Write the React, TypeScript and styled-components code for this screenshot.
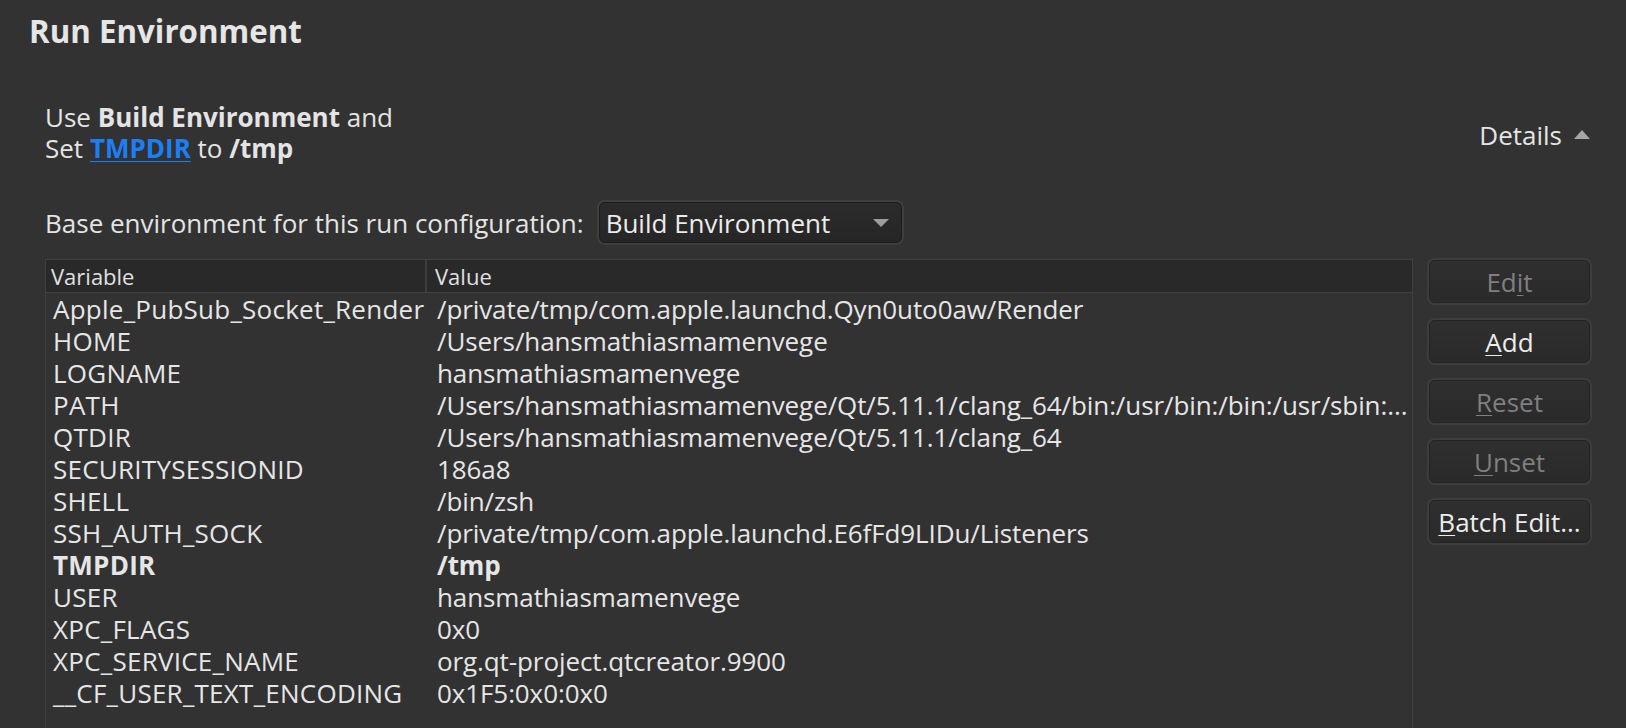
import React from "react";
import styled, { createGlobalStyle } from "styled-components";

const GlobalStyle = createGlobalStyle`
  html, body {
    margin: 0;
    padding: 0;
    background: #323232;
  }
  body {
    font-family: "Open Sans", "Liberation Sans", Arial, sans-serif;
    color: #e4e4e4;
  }
  * { box-sizing: border-box; }
`;

const Page = styled.div`
  height: 728px;
  overflow: hidden;
  display: flex;
  flex-direction: column;
  padding: 0 34px 0 29px;
`;

const Title = styled.h1`
  margin: 11px 0 0 0;
  font-size: 31.3px;
  line-height: 40px;
  font-weight: bold;
  color: #e6e6e6;
`;

const Section = styled.div`
  flex: 1;
  min-height: 0;
  display: flex;
  flex-direction: column;
  margin-left: 16px;
`;

const SummaryRow = styled.div`
  margin-top: 51px;
  display: flex;
  align-items: center;
  justify-content: space-between;
`;

const Summary = styled.div`
  font-size: 26px;
  line-height: 31px;
`;

const Strong = styled.b`
  font-weight: bold;
`;

const Link = styled.a`
  color: #1b80f7;
  font-weight: bold;
  text-decoration: underline;
  text-decoration-thickness: 1px;
  text-underline-offset: 3px;
`;

const DetailsToggle = styled.div`
  display: flex;
  align-items: center;
  gap: 12px;
  font-size: 26px;
  margin: 3px 2px 0 0;
`;

const UpTriangle = styled.span`
  width: 0;
  height: 0;
  border-left: 8px solid transparent;
  border-right: 8px solid transparent;
  border-bottom: 9px solid #a6a6a6;
`;

const BaseRow = styled.div`
  margin-top: 38px;
  display: flex;
  align-items: center;
  gap: 13px;
  font-size: 26px;
`;

const Combo = styled.div`
  width: 303px;
  height: 41px;
  margin-left: 2px;
  display: flex;
  align-items: center;
  justify-content: space-between;
  padding: 0 12px 0 6px;
  background: linear-gradient(#2b2b2b, #262626);
  border: 1px solid #1c1c1c;
  border-radius: 6px;
  box-shadow: 0 0 0 2px #3f3f3f;
  font-size: 26px;
  color: #ececec;
`;

const DownTriangle = styled.span`
  width: 0;
  height: 0;
  border-left: 8px solid transparent;
  border-right: 8px solid transparent;
  border-top: 8px solid #9c9c9c;
`;

const TableArea = styled.div`
  margin-top: 16px;
  flex: 1;
  min-height: 0;
  display: flex;
  gap: 14px;
`;

const Table = styled.div`
  flex: 1;
  min-width: 0;
  border: 1px solid #404040;
  border-bottom: none;
  display: flex;
  flex-direction: column;
`;

const HeaderRow = styled.div`
  display: grid;
  grid-template-columns: 381px 1fr;
  height: 33px;
  background: #292929;
  border-bottom: 1px solid #404040;
  font-size: 22px;
  color: #e0e0e0;
`;

const HeaderCell = styled.div<{ $divider?: boolean }>`
  display: flex;
  align-items: center;
  padding-left: ${(p) => (p.$divider ? "5px" : "8px")};
  border-right: ${(p) => (p.$divider ? "2px solid #3e3e3e" : "none")};
`;

const Row = styled.div<{ $bold?: boolean }>`
  display: grid;
  grid-template-columns: 381px minmax(0, 1fr);
  height: 32px;
  align-items: center;
  font-size: 26px;
  line-height: 32px;
  font-weight: ${(p) => (p.$bold ? "bold" : "normal")};
  color: #e6e6e6;
`;

const NameCell = styled.div`
  padding-left: 7px;
  letter-spacing: 0.25px;
  white-space: nowrap;
`;

const ValueCell = styled.div`
  padding-left: 10px;
  letter-spacing: -0.1px;
  white-space: nowrap;
`;

const Body = styled.div`
  display: flex;
  flex-direction: column;
`;

const ButtonColumn = styled.div`
  width: 165px;
  padding-top: 1px;
  display: flex;
  flex-direction: column;
  gap: 17px;
`;

const Button = styled.button<{ $disabled?: boolean }>`
  height: 43px;
  width: 161px;
  margin: 0 2px;
  background: linear-gradient(#2f2f2f, #2a2a2a);
  border: 1px solid #242424;
  border-radius: 6px;
  box-shadow: 0 0 0 2px #3d3d3d;
  font-family: "Open Sans", "Liberation Sans", Arial, sans-serif;
  font-size: 26px;
  color: ${(p) => (p.$disabled ? "#7f7f7f" : "#ececec")};
  padding: 0;
  cursor: default;
  white-space: nowrap;
`;

const Mnemonic = styled.span`
  text-decoration: underline;
  text-decoration-thickness: 1px;
  text-underline-offset: 3px;
`;

const rows: [string, string, boolean?][] = [
  ["Apple_PubSub_Socket_Render", "/private/tmp/com.apple.launchd.Qyn0uto0aw/Render"],
  ["HOME", "/Users/hansmathiasmamenvege"],
  ["LOGNAME", "hansmathiasmamenvege"],
  ["PATH", "/Users/hansmathiasmamenvege/Qt/5.11.1/clang_64/bin:/usr/bin:/bin:/usr/sbin:..."],
  ["QTDIR", "/Users/hansmathiasmamenvege/Qt/5.11.1/clang_64"],
  ["SECURITYSESSIONID", "186a8"],
  ["SHELL", "/bin/zsh"],
  ["SSH_AUTH_SOCK", "/private/tmp/com.apple.launchd.E6fFd9LIDu/Listeners"],
  ["TMPDIR", "/tmp", true],
  ["USER", "hansmathiasmamenvege"],
  ["XPC_FLAGS", "0x0"],
  ["XPC_SERVICE_NAME", "org.qt-project.qtcreator.9900"],
  ["__CF_USER_TEXT_ENCODING", "0x1F5:0x0:0x0"],
];

export default function App() {
  return (
    <>
      <GlobalStyle />
      <Page>
        <Title>Run Environment</Title>
        <Section>
          <SummaryRow>
            <Summary>
              Use <Strong>Build Environment</Strong> and
              <br />
              Set <Link>TMPDIR</Link> to <Strong>/tmp</Strong>
            </Summary>
            <DetailsToggle>
              Details
              <UpTriangle />
            </DetailsToggle>
          </SummaryRow>
          <BaseRow>
            Base environment for this run configuration:
            <Combo>
              Build Environment
              <DownTriangle />
            </Combo>
          </BaseRow>
          <TableArea>
            <Table>
              <HeaderRow>
                <HeaderCell $divider>Variable</HeaderCell>
                <HeaderCell>Value</HeaderCell>
              </HeaderRow>
              <Body>
                {rows.map(([name, value, bold]) => (
                  <Row key={name} $bold={bold}>
                    <NameCell>{name}</NameCell>
                    <ValueCell>{value}</ValueCell>
                  </Row>
                ))}
              </Body>
            </Table>
            <ButtonColumn>
              <Button $disabled>
                Ed<Mnemonic>i</Mnemonic>t
              </Button>
              <Button>
                <Mnemonic>A</Mnemonic>dd
              </Button>
              <Button $disabled>
                <Mnemonic>R</Mnemonic>eset
              </Button>
              <Button $disabled>
                <Mnemonic>U</Mnemonic>nset
              </Button>
              <Button>
                <Mnemonic>B</Mnemonic>atch Edit...
              </Button>
            </ButtonColumn>
          </TableArea>
        </Section>
      </Page>
    </>
  );
}
